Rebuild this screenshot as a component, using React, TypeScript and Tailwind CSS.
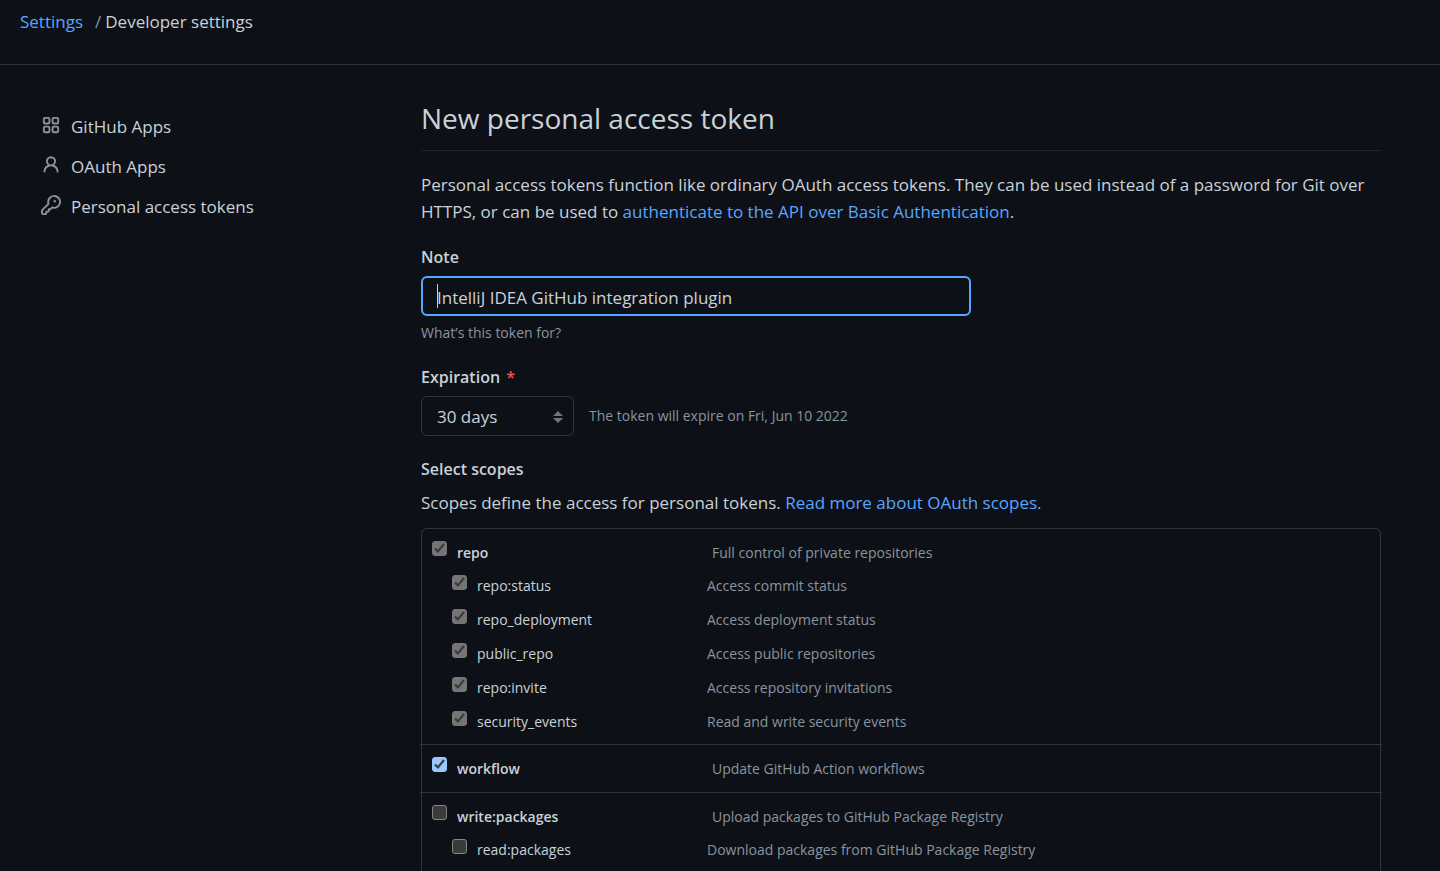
import React from "react";

type Scope = { name: string; description: string; checked?: boolean; disabled?: boolean };
type ScopeGroup = Scope & { children: Scope[] };

const groups: ScopeGroup[] = [
  {
    name: "repo",
    description: "Full control of private repositories",
    checked: true,
    disabled: true,
    children: [
      { name: "repo:status", description: "Access commit status", checked: true, disabled: true },
      { name: "repo_deployment", description: "Access deployment status", checked: true, disabled: true },
      { name: "public_repo", description: "Access public repositories", checked: true, disabled: true },
      { name: "repo:invite", description: "Access repository invitations", checked: true, disabled: true },
      { name: "security_events", description: "Read and write security events", checked: true, disabled: true },
    ],
  },
  { name: "workflow", description: "Update GitHub Action workflows", checked: true, children: [] },
  {
    name: "write:packages",
    description: "Upload packages to GitHub Package Registry",
    children: [{ name: "read:packages", description: "Download packages from GitHub Package Registry" }],
  },
];

function Checkbox({ scope }: { scope: Scope }) {
  return (
    <span className="relative mb-2 block size-[15px] shrink-0">
      <input
        id={scope.name}
        type="checkbox"
        defaultChecked={scope.checked}
        disabled={scope.disabled}
        className="peer block size-[15px] appearance-none rounded-[3px] border border-[#858585] bg-[#3b3b3b] checked:border-[#99c8ff] checked:bg-[#99c8ff] disabled:checked:border-[#757575] disabled:checked:bg-[#757575]"
      />
      <svg
        viewBox="0 0 15 15"
        aria-hidden="true"
        className="pointer-events-none absolute inset-0 hidden size-[15px] peer-checked:block"
      >
        <path d="M3 7.5l2.9 2.9L12 3" fill="none" stroke="#3b3b3b" strokeWidth="2.2" />
      </svg>
    </span>
  );
}

function ScopeRow({ scope, nested = false }: { scope: Scope; nested?: boolean }) {
  return (
    <div className={nested ? "flex h-[34px] items-center pl-5" : "flex h-[33px] items-center"}>
      <div className={nested ? "flex w-[255px] items-center gap-2.5" : "flex w-[280px] items-center gap-2.5"}>
        <Checkbox scope={scope} />
        <label htmlFor={scope.name} className={nested ? "text-sm" : "text-sm font-semibold"}>
          {scope.name}
        </label>
      </div>
      <span className="text-sm text-[#8b949e]">{scope.description}</span>
    </div>
  );
}

const navItems = [
  {
    label: "GitHub Apps",
    icon: (
      <g fill="none" stroke="currentColor" strokeWidth="1.5">
        <rect x="2.25" y="2.25" width="4.5" height="4.5" rx="1" />
        <rect x="9.25" y="2.25" width="4.5" height="4.5" rx="1" />
        <rect x="2.25" y="9.25" width="4.5" height="4.5" rx="1" />
        <rect x="9.25" y="9.25" width="4.5" height="4.5" rx="1" />
      </g>
    ),
  },
  {
    label: "OAuth Apps",
    icon: (
      <path
        fillRule="evenodd"
        d="M10.5 5a2.5 2.5 0 11-5 0 2.5 2.5 0 015 0zm.061 3.073a4 4 0 10-5.123 0 6.004 6.004 0 00-3.431 5.142.75.75 0 001.498.07 4.5 4.5 0 018.99 0 .75.75 0 101.498-.07 6.005 6.005 0 00-3.432-5.142z"
      />
    ),
  },
  {
    label: "Personal access tokens",
    icon: (
      <path
        fillRule="evenodd"
        d="M6.5 5.5a4 4 0 112.731 3.795.75.75 0 00-.768.18L7.44 10.5H6.25a.75.75 0 00-.75.75v1.19l-.06.06H4.25a.75.75 0 00-.75.75v1.19l-.06.06H1.75a.25.25 0 01-.25-.25v-1.69l5.024-5.023a.75.75 0 00.181-.768A3.995 3.995 0 016.5 5.5zm4-5.5a5.5 5.5 0 00-5.348 6.788L.22 11.72a.75.75 0 00-.22.53v2C0 15.216.784 16 1.75 16h2a.75.75 0 00.53-.22l.5-.5a.75.75 0 00.22-.53V14h.75a.75.75 0 00.53-.22l.5-.5a.75.75 0 00.22-.53V12h.75a.75.75 0 00.53-.22l.932-.932A5.5 5.5 0 1010.5 0zm.5 6a1 1 0 100-2 1 1 0 000 2z"
      />
    ),
  },
];

export default function App() {
  return (
    <div className="min-h-screen bg-[#0d1117] font-['Open_Sans',sans-serif] text-[17px] text-[#c9d1d9]">
      <header className="border-b border-[#30363d] px-5 pt-2 pb-7">
        <nav aria-label="Breadcrumb" className="flex h-7 items-center">
          <a href="#settings" className="text-[#58a6ff]">Settings</a>
          <span className="pr-1 pl-3 text-[#8b949e]">/</span>
          <span>Developer settings</span>
        </nav>
      </header>

      <div className="flex gap-20 pt-8 pr-[59px] pl-[41px]">
        <nav aria-label="Developer settings" className="w-[300px] shrink-0 pt-2.5">
          {navItems.map((item) => (
            <a key={item.label} href="#nav" className="flex h-10 items-center gap-2.5">
              <svg viewBox="0 0 16 16" aria-hidden="true" className="mb-1 size-5 shrink-0 fill-current text-[#8b949e]">
                {item.icon}
              </svg>
              {item.label}
            </a>
          ))}
        </nav>

        <main className="min-w-0 flex-1">
          <h1 className="border-b border-[#21262d] pb-[11px] text-[28px] leading-[42px]">New personal access token</h1>

          <p className="mt-5 max-w-[950px] leading-[27px]">
            Personal access tokens function like ordinary OAuth access tokens. They can be used instead of a password
            for Git over HTTPS, or can be used to{" "}
            <a href="#auth" className="text-[#58a6ff]">authenticate to the API over Basic Authentication</a>.
          </p>

          <form>
            <label htmlFor="note" className="mt-5 block text-base leading-6 font-semibold">Note</label>
            <div className="relative mt-[7px] max-w-[550px]">
              <input
                id="note"
                type="text"
                defaultValue="IntelliJ IDEA GitHub integration plugin"
                className="block h-10 w-full rounded-md border-2 border-[#58a6ff] bg-[#0d1117] px-3.5 pt-0.5 outline-none"
              />
              <span aria-hidden="true" className="absolute top-2 left-4 h-6 w-px bg-[#c9d1d9]" />
            </div>
            <p className="mt-1.5 text-sm leading-[22px] text-[#8b949e]">What’s this token for?</p>

            <label htmlFor="expiration" className="mt-[21px] block text-base leading-6 font-semibold">
              Expiration <span className="ml-0.5 text-[#f85149]">*</span>
            </label>
            <div className="mt-[7px] flex items-center gap-[15px]">
              <div className="relative w-[153px]">
                <select
                  id="expiration"
                  defaultValue="30"
                  className="block h-10 w-full appearance-none rounded-md border border-[#30363d] bg-[#0d1117] pt-0.5 pr-8 pl-[15px]"
                >
                  <option value="30">30 days</option>
                  <option value="60">60 days</option>
                  <option value="90">90 days</option>
                </select>
                <svg
                  viewBox="0 0 10 12"
                  aria-hidden="true"
                  className="pointer-events-none absolute top-[15px] right-[11px] h-3 w-2.5 fill-[#6e7681]"
                >
                  <path d="M0 5L5 0l5 5zM0 7h10l-5 5z" />
                </svg>
              </div>
              <span className="text-sm text-[#8b949e]">The token will expire on Fri, Jun 10 2022</span>
            </div>

            <h2 className="mt-[21px] text-base leading-6 font-semibold">Select scopes</h2>
            <p className="mt-2.5 leading-6">
              Scopes define the access for personal tokens.{" "}
              <a href="#scopes" className="text-[#58a6ff]">Read more about OAuth scopes.</a>
            </p>

            <ul className="mt-[13px] rounded-t-md border border-b-0 border-[#30363d]">
              {groups.map((group) => (
                <li
                  key={group.name}
                  className="-mx-0.5 border-t border-[#30363d] py-[7px] pl-3 first:border-t-0 first:pb-[5px]"
                >
                  <ScopeRow scope={group} />
                  {group.children.map((child) => (
                    <ScopeRow key={child.name} scope={child} nested />
                  ))}
                </li>
              ))}
            </ul>
          </form>
        </main>
      </div>
    </div>
  );
}
